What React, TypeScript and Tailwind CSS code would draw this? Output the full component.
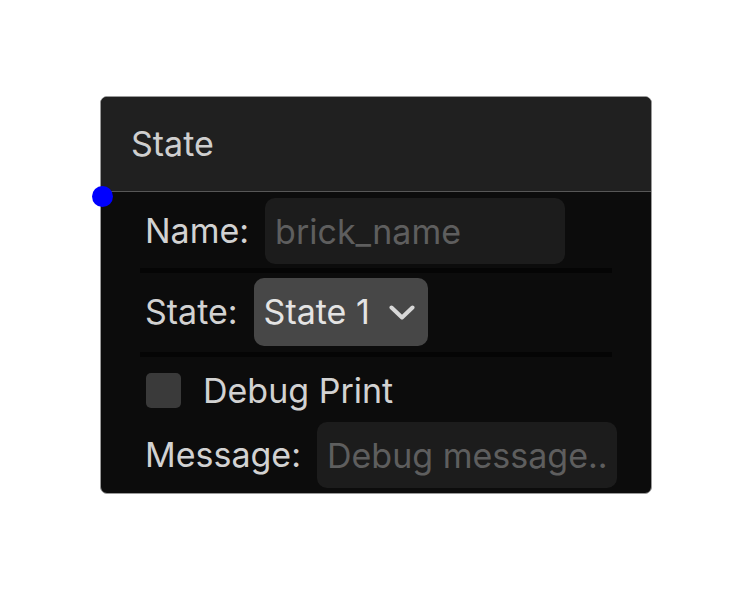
const font = { fontFamily: "Inter, 'Noto Sans', sans-serif" };

function Field({ label, placeholder }: { label: string; placeholder: string }) {
  return (
    <div className="flex items-center gap-[16px] pl-[5px] h-[66px]">
      <span className="text-[34px] leading-none text-[#d2d2d2] whitespace-nowrap">{label}</span>
      <input
        placeholder={placeholder}
        className="w-[300px] h-[66px] shrink-0 rounded-[10px] bg-[#1c1c1c] px-[10px] text-[34px] text-[#e0e0e0] placeholder:text-[#5e5e5e] outline-none"
        style={font}
      />
    </div>
  );
}

function Divider() {
  return <div className="h-[5px] shrink-0 bg-[#050505]" />;
}

export default function App() {
  return (
    <div className="w-[752px] h-[594px] bg-white relative" style={font}>
      <div className="absolute left-[100px] top-[96px] w-[552px] h-[398px] rounded-[7px] border border-[#9a9a9a] bg-[#0c0c0c] overflow-hidden flex flex-col">
        <div className="h-[95px] shrink-0 bg-[#202020] border-b border-[#575757] flex items-center pl-[30px]">
          <span className="text-[34px] leading-none text-[#cfcfcf]">State</span>
        </div>

        <div className="flex flex-col px-[39px] pt-[6px]">
          <Field label="Name:" placeholder="brick_name" />
          <div className="mt-[4px]">
            <Divider />
          </div>

          <div className="flex items-center gap-[16px] pl-[5px] mt-[5px] h-[68px]">
            <span className="text-[34px] leading-none text-[#d2d2d2]">State:</span>
            <div className="h-[68px] w-[174px] rounded-[10px] bg-[#474747] flex items-center gap-[19px] pl-[10px] pr-[12px]">
              <span className="text-[34px] leading-none text-[#e4e4e4] whitespace-nowrap">State 1</span>
              <svg width="26" height="15" viewBox="0 0 26 15" fill="none" className="shrink-0">
                <path d="M2.5 2.5 13 12.5 23.5 2.5" stroke="#d8d8d8" strokeWidth="4" strokeLinecap="round" strokeLinejoin="round" />
              </svg>
            </div>
          </div>
          <div className="mt-[6px]">
            <Divider />
          </div>

          <div className="flex items-center gap-[22px] pl-[6px] mt-[16px] h-[35px]">
            <div className="w-[35px] h-[35px] rounded-[5px] bg-[#3a3a3a]" />
            <span className="text-[34px] leading-none text-[#d2d2d2]">Debug Print</span>
          </div>

          <div className="mt-[14px]">
            <Field label="Message:" placeholder="Debug message.." />
          </div>
        </div>
      </div>

      <div className="absolute left-[92px] top-[186px] w-[21px] h-[21px] rounded-full bg-[#0000ff]" />
    </div>
  );
}
